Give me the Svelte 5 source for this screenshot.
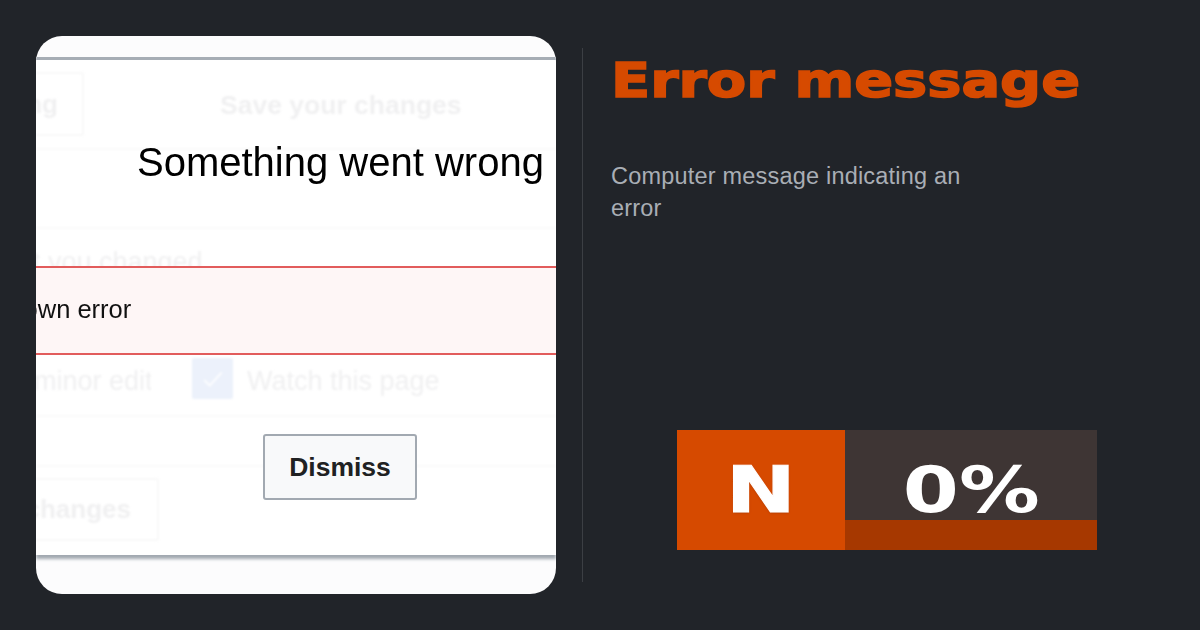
<script>
  let title = 'Error message';
  let description = 'Computer message indicating an error';
  let score = 0;
</script>

<div class="page">
  <div class="card">
    <div class="dialog">
      <!-- faded form behind the error -->
      <div class="ghost">
        <div class="ghost-head">
          <span class="ghost-btn back">ng</span>
          <span class="ghost-title">Save your changes</span>
        </div>
        <div class="ghost-changed"><span>t you changed</span></div>
        <div class="ghost-options">
          <span class="minor">minor edit</span>
          <span class="check">
            <svg viewBox="0 0 24 24" width="26" height="26"><path d="M4 13l5 5L20 6" fill="none" stroke="#fff" stroke-width="1.6" /></svg>
          </span>
          <span class="watch">Watch this page</span>
        </div>
        <div class="ghost-foot">
          <span class="ghost-btn save">changes</span>
        </div>
      </div>

      <div class="front">
        <h2>Something went wrong</h2>
        <div class="banner"><span>Unknown error</span></div>
        <button>Dismiss</button>
      </div>
    </div>
  </div>

  <div class="divider"></div>

  <div class="info">
    <h1><span>{title}</span></h1>
    <p>{description}</p>
    <div class="badge">
      <div class="letter"><span>N</span></div>
      <div class="percent">
        <div class="value"><span>{score}%</span></div>
        <div class="bar"></div>
      </div>
    </div>
  </div>
</div>

<style>
  :global(body) {
    background: #212429;
  }

  .page {
    width: 1200px;
    height: 630px;
    box-sizing: border-box;
    padding: 36px;
    display: flex;
    overflow: hidden;
    background: #212429;
    font-family: "Liberation Sans", Arial, sans-serif;
  }

  .card {
    width: 520px;
    height: 558px;
    flex: none;
    box-sizing: border-box;
    padding-top: 21px;
    background: #fcfcfd;
    border-radius: 26px;
    overflow: hidden;
  }

  .dialog {
    height: 495px;
    display: grid;
    background: #fff;
    border-top: 3px solid #a6adb5;
    box-shadow: 0 4px 3px #a2a9b1;
    overflow: hidden;
  }

  .ghost, .front {
    grid-area: 1 / 1;
    min-width: 0;
  }

  .ghost {
    display: flex;
    flex-direction: column;
    color: #f0f0f1;
    font-size: 27px;
    filter: blur(1px);
  }

  .ghost-head {
    height: 90px;
    box-sizing: border-box;
    padding-top: 12px;
    display: flex;
    border-bottom: 2px solid #fafafa;
  }

  .ghost-btn {
    box-sizing: border-box;
    height: 64px;
    display: flex;
    align-items: center;
    border: 2px solid #f8f8f8;
    border-left: 0;
    border-radius: 0 3px 3px 0;
    font-weight: bold;
    font-size: 26px;
    white-space: nowrap;
  }

  .back {
    width: 48px;
    justify-content: flex-end;
    padding-right: 24px;
  }

  .ghost-title {
    margin-left: 136px;
    margin-top: 18px;
    font-weight: bold;
    font-size: 26.5px;
    white-space: nowrap;
  }

  .ghost-changed {
    height: 79px;
    border-bottom: 2px solid #fafafa;
    box-sizing: border-box;
  }

  .ghost-changed span {
    display: block;
    margin-left: -3px;
    padding-top: 97px;
    white-space: nowrap;
    height: 20px;
  }

  .ghost-options {
    margin-top: 129px;
    height: 57px;
    display: flex;
    align-items: flex-start;
    gap: 14px;
    border-bottom: 2px solid #fafafa;
  }

  .minor {
    margin-left: -2px;
    margin-right: 27px;
    width: 117px;
    white-space: nowrap;
    overflow: hidden;
    margin-top: 8px;
  }

  .watch {
    margin-top: 8px;
  }

  .check {
    width: 41px;
    height: 41px;
    flex: none;
    display: flex;
    align-items: center;
    justify-content: center;
    background: #ecf1fb;
    border-radius: 2px;
  }

  .ghost-foot {
    border-top: 2px solid #fafafa;
    margin-top: 48px;
    padding-top: 11px;
  }

  .save {
    width: 123px;
    height: 63px;
    justify-content: flex-end;
    padding-right: 26px;
  }

  .front {
    display: flex;
    flex-direction: column;
    align-items: flex-start;
    filter: blur(0.6px);
  }

  h2 {
    margin: 78px 0 0 101px;
    height: 48px;
    font-size: 40px;
    line-height: 48px;
    font-weight: normal;
    color: #000;
    white-space: nowrap;
  }

  .banner {
    margin-top: 80px;
    width: 100%;
    height: 89px;
    box-sizing: border-box;
    display: flex;
    align-items: center;
    background: #fef6f6;
    border-top: 2px solid #e25c5c;
    border-bottom: 2px solid #e25c5c;
    color: #111;
    font-size: 25.5px;
    overflow: hidden;
  }

  .banner span {
    margin-left: -72px;
    margin-top: -3px;
    white-space: nowrap;
  }

  button {
    margin: 79px 0 0 227px;
    width: 154px;
    height: 66px;
    background: #f8f9fa;
    border: 2px solid #a2a9b1;
    border-radius: 3px;
    color: #202122;
    font-family: inherit;
    font-size: 26.5px;
    font-weight: bold;
  }

  .divider {
    width: 1px;
    height: 534px;
    flex: none;
    margin: 12px 0 0 26px;
    background: #3c3f44;
  }

  .info {
    flex: 1;
    min-width: 0;
    padding-left: 28px;
    display: flex;
    flex-direction: column;
  }

  h1 {
    margin: 14px 0 0 0;
    height: 60px;
    font-family: "DejaVu Sans", sans-serif;
    font-size: 48px;
    line-height: 60px;
    color: #d64a00;
    white-space: nowrap;
  }

  h1 span {
    display: inline-block;
    transform: scaleX(1.195);
    transform-origin: left center;
    -webkit-text-stroke: 1.6px #d64a00;
  }

  p {
    margin: 50px 0 0 0;
    width: 370px;
    font-size: 23.5px;
    letter-spacing: 0.2px;
    line-height: 32px;
    color: #a9aeb5;
  }

  .badge {
    width: 420px;
    height: 120px;
    margin: 206px 0 0 66px;
    display: flex;
    font-family: "DejaVu Sans", sans-serif;
    font-weight: bold;
    color: #fff;
  }

  .letter {
    width: 168px;
    background: #d64a00;
    display: flex;
    align-items: center;
    justify-content: center;
    font-size: 64px;
    line-height: 1;
  }

  .letter span {
    display: inline-block;
    transform: scaleX(1.3);
    -webkit-text-stroke: 1px #fff;
    text-shadow: 0 1px 2px #a63800;
  }

  .percent {
    flex: 1;
    display: flex;
    flex-direction: column;
    background: #3e3534;
  }

  .value {
    flex: 1;
    display: flex;
    align-items: center;
    justify-content: center;
    font-size: 64px;
    line-height: 1;
  }

  .value span {
    display: inline-block;
    transform: translateY(15px) scaleX(1.26);
  }

  .bar {
    height: 30px;
    background: #a63800;
  }
</style>
